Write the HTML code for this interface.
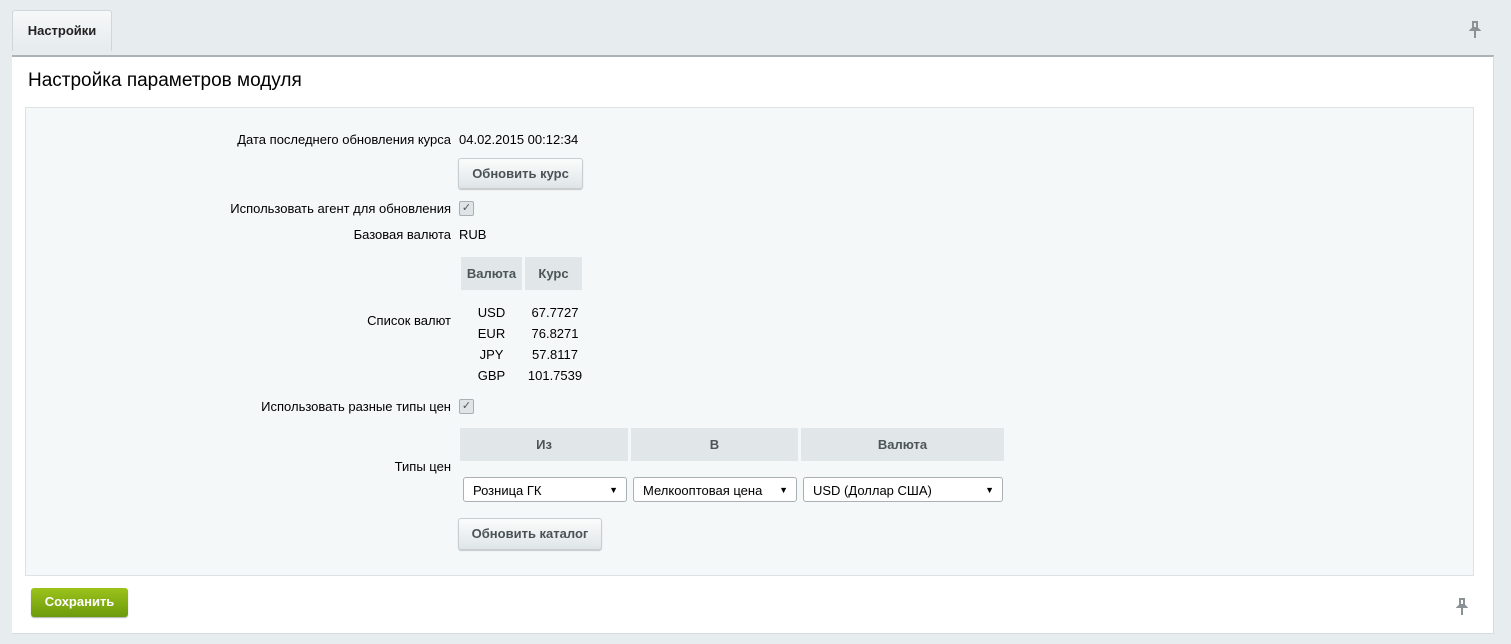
<!DOCTYPE html>
<html><head><meta charset="utf-8"><style>
body{margin:0;width:1511px;height:644px;background:#e7ecee;font-family:"Liberation Sans",Arial,sans-serif;font-size:13px;color:#000;position:relative;overflow:hidden}
.a{position:absolute}
.tab{left:12px;top:10px;width:98px;height:40px;background:linear-gradient(#f6f8f9,#e6ebed);border:1px solid #d0d6d9;border-bottom:none;border-radius:3px 3px 0 0;font-weight:bold;font-size:13px;line-height:40px;text-align:center;color:#222}
.panel{left:12px;top:55px;width:1481px;height:576px;background:#fff;border-top:2px solid #a9b2b6;border-right:1px solid #d6dcde;border-bottom:1px solid #d6dcde}
.inner{left:25px;top:107px;width:1447px;height:467px;background:#f5f8f9;border:1px solid #dde3e5}
.lbl{right:1060px;text-align:right;white-space:nowrap}
.btn{background:linear-gradient(#fbfcfc,#dfe5e7);border:1px solid #c6ced1;border-radius:3px;box-shadow:0 1px 1px rgba(0,0,0,.2);font-weight:bold;color:#4a5256;text-align:center;font-size:13px}
.cb{width:13px;height:13px;border:1px solid #a8b0b4;border-radius:2px;background:#dfe4e6;font-size:11px;line-height:13px;text-align:center;color:#555}
.th{background:#e1e6e8;font-weight:bold;color:#4d5559;text-align:center;font-size:13px}
.sel{background:#fff;border:1px solid #a9b1b5;border-radius:3px;height:25px;line-height:25px;padding-left:9px;box-sizing:border-box;color:#000}
.sel span{position:absolute;right:8px;top:0;font-size:9px}
</style></head><body>
<div class="a tab">Настройки</div>
<svg class="a" style="left:1469px;top:21px" width="12" height="18" viewBox="0 0 12 18"><path d="M3 1h6M4 1v6M8 1v6M2 9h8L8 7H4zM6 9v8" stroke="#8a9295" stroke-width="2" fill="#8a9295"/></svg>
<div class="a panel"></div>
<div class="a" style="left:28px;top:70px;font-size:19px;color:#000">Настройка параметров модуля</div>
<div class="a inner"></div>
<div class="a lbl" style="top:132px">Дата последнего обновления курса</div>
<div class="a" style="left:459px;top:132px">04.02.2015 00:12:34</div>
<div class="a btn" style="left:458px;top:158px;width:123px;height:29px;line-height:29px">Обновить курс</div>
<div class="a lbl" style="top:201px">Использовать агент для обновления</div>
<div class="a cb" style="left:459px;top:201px">✓</div>
<div class="a lbl" style="top:227px">Базовая валюта</div>
<div class="a" style="left:459px;top:227px">RUB</div>
<div class="a th" style="left:461px;top:257px;width:61px;height:33px;line-height:33px">Валюта</div>
<div class="a th" style="left:525px;top:257px;width:57px;height:33px;line-height:33px">Курс</div>
<div class="a lbl" style="top:313px">Список валют</div>
<div class="a" style="left:461px;top:302px;width:61px;text-align:center;line-height:21px">USD<br>EUR<br>JPY<br>GBP</div>
<div class="a" style="left:525px;top:302px;width:60px;text-align:center;line-height:21px">67.7727<br>76.8271<br>57.8117<br>101.7539</div>
<div class="a lbl" style="top:399px">Использовать разные типы цен</div>
<div class="a cb" style="left:459px;top:399px">✓</div>
<div class="a th" style="left:460px;top:428px;width:168px;height:33px;line-height:33px">Из</div>
<div class="a th" style="left:631px;top:428px;width:167px;height:33px;line-height:33px">В</div>
<div class="a th" style="left:801px;top:428px;width:203px;height:33px;line-height:33px">Валюта</div>
<div class="a lbl" style="top:459px">Типы цен</div>
<div class="a sel" style="left:463px;top:477px;width:164px">Розница ГК<span>▼</span></div>
<div class="a sel" style="left:633px;top:477px;width:164px">Мелкооптовая цена<span>▼</span></div>
<div class="a sel" style="left:803px;top:477px;width:200px">USD (Доллар США)<span>▼</span></div>
<div class="a btn" style="left:458px;top:518px;width:142px;height:30px;line-height:30px">Обновить каталог</div>
<div class="a" style="left:31px;top:588px;width:97px;height:29px;line-height:28px;border-radius:3px;background:linear-gradient(#9cc31c,#6c9a0b);color:#fff;font-weight:bold;text-align:center;box-shadow:0 1px 1px rgba(0,0,0,.3)">Сохранить</div>
<svg class="a" style="left:1456px;top:598px" width="12" height="18" viewBox="0 0 12 18"><path d="M3 1h6M4 1v6M8 1v6M2 9h8L8 7H4zM6 9v8" stroke="#8a9295" stroke-width="2" fill="#8a9295"/></svg>
</body></html>
